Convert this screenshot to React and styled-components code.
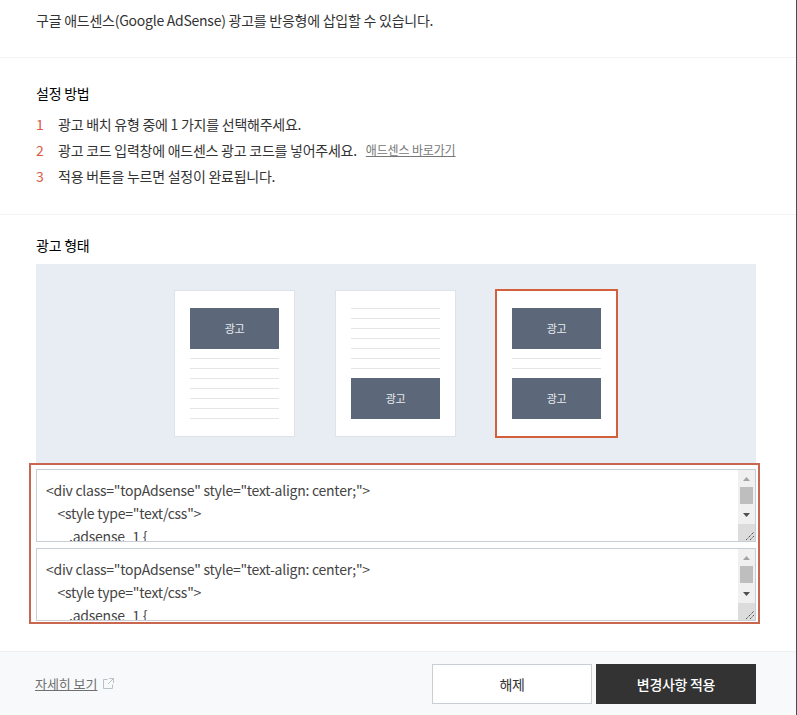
import React from 'react'
import styled, { createGlobalStyle } from 'styled-components'

const adCode = `<div class="topAdsense" style="text-align: center;">
    <style type="text/css">
        .adsense_1 {`

const GlobalStyle = createGlobalStyle`
  html, body {
    margin: 0;
    padding: 0;
    background: #fff;
  }
  * {
    box-sizing: border-box;
  }
`

const Page = styled.div`
  width: 797px;
  height: 715px;
  overflow: hidden;
  display: flex;
  flex-direction: column;
  border-right: 1px solid #3f4e5e;
  font-family: 'Noto Sans CJK KR', 'Noto Sans', sans-serif;
  font-size: 14px;
  color: #333;
  letter-spacing: -0.25px;
`

const Section = styled.section`
  padding: ${(p) => p.$padding};
  border-bottom: ${(p) => (p.$last ? '0' : '1px solid #f1f2f4')};
`

const Intro = styled.p`
  margin: 0;
  line-height: 22px;
`

const Title = styled.h3`
  margin: 0;
  font-size: 14px;
  font-weight: 400;
  line-height: 20px;
  color: #000;
`

const Steps = styled.ol`
  list-style: none;
  margin: 8px 0 0;
  padding: 0;
`

const Step = styled.li`
  display: flex;
  height: 26px;
  line-height: 26px;
`

const StepNo = styled.span`
  width: 22px;
  color: #dc5a48;
`

const GuideLink = styled.a`
  margin-left: 9px;
  font-size: 12px;
  letter-spacing: -0.15px;
  color: #777;
  text-decoration: underline;
`

const TypePanel = styled.div`
  display: flex;
  justify-content: center;
  gap: 40px;
  height: 200px;
  margin-top: 9px;
  padding: 26px 1px 0 0;
  background: #e8ecf3;
`

const Card = styled.div`
  display: flex;
  flex-direction: column;
  width: 121px;
  height: 147px;
  padding: 17px 15px 0;
  background: #fff;
  border: 1px solid ${(p) => (p.$selected ? '#d2603a' : '#dfe3e8')};
  box-shadow: ${(p) => (p.$selected ? '0 0 0 1px #d2603a' : 'none')};
`

const AdBlock = styled.div`
  flex: none;
  height: 41px;
  padding-bottom: 2px;
  display: flex;
  align-items: center;
  justify-content: center;
  background: #5c6779;
  color: #e9ecf0;
  font-size: 11px;
`

const TextLines = styled.div`
  flex: none;
  display: flex;
  flex-direction: column;
  gap: 9px;
  margin: ${(p) => p.$margin};
`

const TextLine = styled.i`
  display: block;
  height: 1px;
  background: #e3e5e8;
`

const CodeFrame = styled.div`
  display: flex;
  flex-direction: column;
  gap: 6px;
  margin: -1px -4px 0 -7px;
  padding: 4px 2px 1px 5px;
  border: 2px solid #c8664f;
  position: relative;
`

const CodeBox = styled.div`
  display: flex;
  height: 73px;
  border: 1px solid #c7ced5;
  background: #fff;
`

const CodeArea = styled.textarea`
  flex: 1;
  min-width: 0;
  margin: 0;
  padding: 9px 9px 0;
  border: 0;
  outline: 0;
  resize: none;
  overflow: hidden;
  font: inherit;
  line-height: 23px;
  letter-spacing: -0.25px;
  color: #444;
  background: transparent;
`

const ScrollBar = styled.div`
  flex: none;
  width: 17px;
  display: flex;
  flex-direction: column;
  align-items: center;
  background: #f0f0f0;
`

const ScrollArrow = styled.svg`
  flex: none;
  width: 7px;
  height: 4px;
  margin-top: ${(p) => p.$top}px;
  fill: ${(p) => p.$color};
`

const ScrollThumb = styled.div`
  flex: none;
  width: 13px;
  height: 17px;
  margin-top: 6px;
  background: #bebebe;
`

const ResizeCorner = styled.svg`
  flex: none;
  width: 17px;
  height: 17px;
  margin-top: auto;
  background: #dcdcdc;
`

const Footer = styled.footer`
  flex: 1;
  display: flex;
  align-items: flex-start;
  margin-top: 27px;
  padding: 12px 40px 0 35px;
  background: #f8f9fb;
  border-top: 1px solid #eef0f3;
`

const MoreLink = styled.a`
  display: flex;
  align-items: center;
  gap: 6px;
  height: 40px;
  padding-bottom: 1px;
  color: #707070;
  font-size: 13px;
  letter-spacing: -0.05px;
  span {
    text-decoration: underline;
  }
`

const Buttons = styled.div`
  display: flex;
  gap: 4px;
  margin-left: auto;
`

const Button = styled.button`
  width: 160px;
  height: 40px;
  font-family: inherit;
  font-size: 14px;
  font-weight: ${(p) => (p.$primary ? 500 : 400)};
  letter-spacing: -0.3px;
  color: ${(p) => (p.$primary ? '#fff' : '#333')};
  background: ${(p) => (p.$primary ? '#333' : '#fff')};
  border: 1px solid ${(p) => (p.$primary ? '#333' : '#c9ced4')};
`

function Lines({ count, margin }) {
  return (
    <TextLines $margin={margin}>
      {Array.from({ length: count }).map((_, i) => (
        <TextLine key={i} />
      ))}
    </TextLines>
  )
}

function CodeEditor() {
  return (
    <CodeBox>
      <CodeArea readOnly value={adCode} />
      <ScrollBar>
        <ScrollArrow $top={7} $color="#a3a3a3" viewBox="0 0 7 4">
          <path d="M3.5 0 7 4H0z" />
        </ScrollArrow>
        <ScrollThumb />
        <ScrollArrow $top={9} $color="#505050" viewBox="0 0 7 4">
          <path d="M0 0h7L3.5 4z" />
        </ScrollArrow>
        <ResizeCorner viewBox="0 0 17 17">
          <path d="M8 16 16 8M12 16l4-4" stroke="#555" strokeWidth="1" strokeDasharray="1.41 .7" fill="none" />
        </ResizeCorner>
      </ScrollBar>
    </CodeBox>
  )
}

export default function App() {
  return (
    <Page>
      <GlobalStyle />
      <Section $padding="9px 36px 26px">
        <Intro>구글 애드센스(Google AdSense) 광고를 반응형에 삽입할 수 있습니다.</Intro>
      </Section>
      <Section $padding="25px 36px 25px">
        <Title>설정 방법</Title>
        <Steps>
          <Step>
            <StepNo>1</StepNo>광고 배치 유형 중에 1 가지를 선택해주세요.
          </Step>
          <Step>
            <StepNo>2</StepNo>광고 코드 입력창에 애드센스 광고 코드를 넣어주세요.
            <GuideLink>애드센스 바로가기</GuideLink>
          </Step>
          <Step>
            <StepNo>3</StepNo>적용 버튼을 누르면 설정이 완료됩니다.
          </Step>
        </Steps>
      </Section>
      <Section as="div" $last $padding="20px 40px 0 36px">
        <Title>광고 형태</Title>
        <TypePanel>
          <Card>
            <AdBlock>광고</AdBlock>
            <Lines count={7} margin="9px 0 0" />
          </Card>
          <Card>
            <Lines count={7} margin="0 0 9px" />
            <AdBlock>광고</AdBlock>
          </Card>
          <Card $selected>
            <AdBlock>광고</AdBlock>
            <Lines count={2} margin="9px 0" />
            <AdBlock>광고</AdBlock>
          </Card>
        </TypePanel>
        <CodeFrame>
          <CodeEditor />
          <CodeEditor />
        </CodeFrame>
      </Section>
      <Footer>
        <MoreLink>
          <span>자세히 보기</span>
          <svg width="11" height="11" viewBox="0 0 11 11" fill="none" stroke="#bcc1c6">
            <path d="M4.5 1.5h-4v9h9v-4M6 .5h4.5V5M10.5.5 5 6" />
          </svg>
        </MoreLink>
        <Buttons>
          <Button>해제</Button>
          <Button $primary>변경사항 적용</Button>
        </Buttons>
      </Footer>
    </Page>
  )
}
